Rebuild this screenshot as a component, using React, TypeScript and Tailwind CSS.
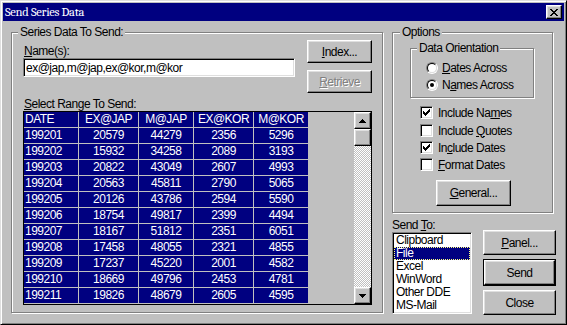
import React from "react";

const rows: [string, string, string, string, string][] = [
  ["199201", "20579", "44279", "2356", "5296"],
  ["199202", "15932", "34258", "2089", "3193"],
  ["199203", "20822", "43049", "2607", "4993"],
  ["199204", "20563", "45811", "2790", "5065"],
  ["199205", "20126", "43786", "2594", "5590"],
  ["199206", "18754", "49817", "2399", "4494"],
  ["199207", "18167", "51812", "2351", "6051"],
  ["199208", "17458", "48055", "2321", "4855"],
  ["199209", "17237", "45220", "2001", "4582"],
  ["199210", "18669", "49796", "2453", "4781"],
  ["199211", "19826", "48679", "2605", "4595"],
];

const raised =
  "border border-white border-r-black border-b-black shadow-[inset_-1px_-1px_0_#808080,inset_1px_1px_0_#dfdfdf] bg-[#c0c0c0]";
const sunken =
  "border border-[#808080] border-r-white border-b-white shadow-[inset_1px_1px_0_#000,inset_-1px_-1px_0_#dfdfdf]";
const etched =
  "relative border border-[#808080] shadow-[inset_1px_1px_0_#fff,1px_1px_0_#fff]";

function Btn({
  children,
  className = "",
  disabled = false,
}: {
  children: React.ReactNode;
  className?: string;
  disabled?: boolean;
}) {
  return (
    <div
      className={`${raised} flex items-center justify-center ${
        disabled ? "text-[#808080] [text-shadow:1px_1px_0_#fff]" : ""
      } ${className}`}
    >
      {children}
    </div>
  );
}

function Radio({ checked }: { checked?: boolean }) {
  return (
    <div className="w-[12px] h-[12px] rounded-full border border-[#808080] border-b-white border-r-white shrink-0">
      <div className="w-full h-full rounded-full border border-black border-b-[#dfdfdf] border-r-[#dfdfdf] bg-white flex items-center justify-center">
        {checked && <div className="w-[4px] h-[4px] rounded-full bg-black" />}
      </div>
    </div>
  );
}

const checkPx = [
  "......X",
  ".....XX",
  "X...XXX",
  "XX.XXX.",
  "XXXXX..",
  ".XXX...",
  "..X....",
];

function Check({ checked }: { checked?: boolean }) {
  return (
    <div
      className={`w-[13px] h-[13px] bg-white ${sunken} shrink-0 flex items-center justify-center`}
    >
      {checked && (
        <svg width="7" height="7" viewBox="0 0 7 7" shapeRendering="crispEdges">
          {checkPx.map((r, y) =>
            r.split("").map((c, x) =>
              c === "X" ? <rect key={`${x}-${y}`} x={x} y={y} width="1" height="1" fill="#000" /> : null
            )
          )}
        </svg>
      )}
    </div>
  );
}

const xPx = [
  "XX....XX",
  ".XX..XX.",
  "..XXXX..",
  "...XX...",
  "..XXXX..",
  ".XX..XX.",
  "XX....XX",
];

function Arrow({ up }: { up?: boolean }) {
  const r = up
    ? [
        [3, 0, 1],
        [2, 1, 3],
        [1, 2, 5],
        [0, 3, 7],
      ]
    : [
        [0, 0, 7],
        [1, 1, 5],
        [2, 2, 3],
        [3, 3, 1],
      ];
  return (
    <svg width="7" height="4" viewBox="0 0 7 4" shapeRendering="crispEdges">
      {r.map(([x, y, w]) => (
        <rect key={y} x={x} y={y} width={w} height="1" fill="#000" />
      ))}
    </svg>
  );
}

export default function App() {
  return (
    <div className="w-[567px] h-[325px] bg-[#c0c0c0] border border-[#dfdfdf] border-r-black border-b-black shadow-[inset_1px_1px_0_#fff,inset_-1px_-1px_0_#808080] p-[2px] font-['Liberation_Sans',Arial,sans-serif] text-[12px] leading-[14px] tracking-[-0.5px] text-black flex flex-col overflow-hidden">
      {/* Title bar */}
      <div className="h-[18px] bg-[#000080] flex items-center justify-between pl-[2px] pr-[2px] shrink-0">
        <span className="font-serif font-normal text-[12.5px] tracking-[-0.3px] text-white leading-[18px]">
          Send Series Data
        </span>
        <div className={`${raised} w-[16px] h-[14px] flex items-center justify-center`}>
          <svg width="8" height="7" viewBox="0 0 8 7" shapeRendering="crispEdges">
            {xPx.map((r, y) =>
              r.split("").map((c, x) =>
                c === "X" ? <rect key={`${x}-${y}`} x={x} y={y} width="1" height="1" fill="#000" /> : null
              )
            )}
          </svg>
        </div>
      </div>

      {/* Body */}
      <div className="flex pl-[8px] pt-[11px]">
        {/* Left group */}
        <div className={`${etched} w-[372px] h-[281px] shrink-0 pl-[11px] pt-[7px]`}>
          <span className="absolute top-[-8px] left-[6px] bg-[#c0c0c0] px-[2px]">Series Data To Send:</span>
          <div className="flex">
            <div className="w-[272px] flex flex-col">
              <div className="mt-[4px] pl-[1px]">
                <u>N</u>ame(s):
              </div>
              <div className={`${sunken} bg-white h-[19px] w-[272px] pl-[2px] flex items-center`}>
                ex@jap,m@jap,ex@kor,m@kor
              </div>
            </div>
            <div className="ml-[12px] flex flex-col">
              <Btn className="w-[65px] h-[23px]">
                <span>
                  <u>I</u>ndex...
                </span>
              </Btn>
              <Btn className="w-[65px] h-[23px] mt-[7px]" disabled>
                <span>
                  <u>R</u>etrieve
                </span>
              </Btn>
            </div>
          </div>
          <div className="mt-[4px] pl-[1px]">
            <u>S</u>elect Range To Send:
          </div>
          <div className="w-[349px] h-[194px] border border-black flex">
            <div className="w-[285px] flex flex-col bg-[#000080] text-white">
              <div className="flex h-[16px] leading-[15px]">
                <div className="w-[55px] border-r border-b border-[#c0c0c0] pl-[1px]">DATE</div>
                <div className="w-[60px] border-r border-b border-[#c0c0c0] text-center">EX@JAP</div>
                <div className="w-[55px] border-r border-b border-[#c0c0c0] text-center">M@JAP</div>
                <div className="w-[60px] border-r border-b border-[#c0c0c0] text-center">EX@KOR</div>
                <div className="w-[55px] border-r border-b border-[#c0c0c0] text-center">M@KOR</div>
              </div>
              {rows.map((r) => (
                <div key={r[0]} className="flex h-[16px] leading-[15px]">
                  <div className="w-[55px] border-r border-b border-[#c0c0c0] pl-[1px]">{r[0]}</div>
                  <div className="w-[60px] border-r border-b border-[#c0c0c0] text-center">{r[1]}</div>
                  <div className="w-[55px] border-r border-b border-[#c0c0c0] text-center">{r[2]}</div>
                  <div className="w-[60px] border-r border-b border-[#c0c0c0] text-center">{r[3]}</div>
                  <div className="w-[55px] border-r border-b border-[#c0c0c0] text-center">{r[4]}</div>
                </div>
              ))}
            </div>
            <div className="w-[45px] bg-[#c0c0c0]" />
            <div className="w-[17px] flex flex-col">
              <Btn className="h-[17px] w-[17px]">
                <Arrow up />
              </Btn>
              <Btn className="h-[17px] w-[17px]">{null}</Btn>
              <div className="flex-1 [background-image:repeating-conic-gradient(#c0c0c0_0%_25%,#ffffff_0%_50%)] [background-size:2px_2px]" />
              <Btn className="h-[17px] w-[17px]">
                <Arrow />
              </Btn>
            </div>
          </div>
        </div>

        {/* Right column */}
        <div className="ml-[9px] w-[164px] flex flex-col">
          <div className={`${etched} w-[161px] h-[181px] pl-[17px] pt-[15px]`}>
            <span className="absolute top-[-8px] left-[7px] bg-[#c0c0c0] px-[2px]">Options</span>
            <div className={`${etched} w-[124px] h-[50px] pl-[15px] pt-[13px]`}>
              <span className="absolute top-[-8px] left-[6px] bg-[#c0c0c0] px-[2px]">Data Orientation</span>
              <div className="flex items-center h-[12px]">
                <Radio />
                <span className="ml-[4px]">
                  <u>D</u>ates Across
                </span>
              </div>
              <div className="flex items-center h-[12px] mt-[5px]">
                <Radio checked />
                <span className="ml-[4px]">
                  N<u>a</u>mes Across
                </span>
              </div>
            </div>
            <div className="ml-[10px] mt-[8px] flex flex-col">
              <div className="flex items-center h-[13px]">
                <Check checked />
                <span className="ml-[5px]">
                  Include Na<u>m</u>es
                </span>
              </div>
              <div className="flex items-center h-[13px] mt-[5px]">
                <Check />
                <span className="ml-[5px]">
                  Include <u>Q</u>uotes
                </span>
              </div>
              <div className="flex items-center h-[13px] mt-[4px]">
                <Check checked />
                <span className="ml-[5px]">
                  In<u>c</u>lude Dates
                </span>
              </div>
              <div className="flex items-center h-[13px] mt-[4px]">
                <Check />
                <span className="ml-[5px]">
                  <u>F</u>ormat Dates
                </span>
              </div>
            </div>
            <Btn className="w-[75px] h-[26px] ml-[26px] mt-[9px]">
              <span>
                <u>G</u>eneral...
              </span>
            </Btn>
          </div>

          <div className="flex mt-[5px]">
            <div className="w-[80px] flex flex-col">
              <div>
                Send <u>T</u>o:
              </div>
              <div className={`${sunken} bg-white w-[80px] h-[82px] pt-[1px] px-[1px] leading-[13px]`}>
                <div className="h-[13px] pl-[2px]">Clipboard</div>
                <div className="h-[13px] pl-[1px] bg-[#000080] text-white border border-dotted border-[#ffff80] leading-[11px]">
                  File
                </div>
                <div className="h-[13px] pl-[2px]">Excel</div>
                <div className="h-[13px] pl-[2px]">WinWord</div>
                <div className="h-[13px] pl-[2px]">Other DDE</div>
                <div className="h-[13px] pl-[2px]">MS-Mail</div>
              </div>
            </div>
            <div className="ml-[11px] mt-[12px] flex flex-col">
              <Btn className="w-[73px] h-[25px]">
                <span>
                  <u>P</u>anel...
                </span>
              </Btn>
              <div className="w-[73px] h-[27px] mt-[4px] border border-black">
                <Btn className="w-full h-full">Send</Btn>
              </div>
              <Btn className="w-[73px] h-[25px] mt-[4px]">Close</Btn>
            </div>
          </div>
        </div>
      </div>
    </div>
  );
}
